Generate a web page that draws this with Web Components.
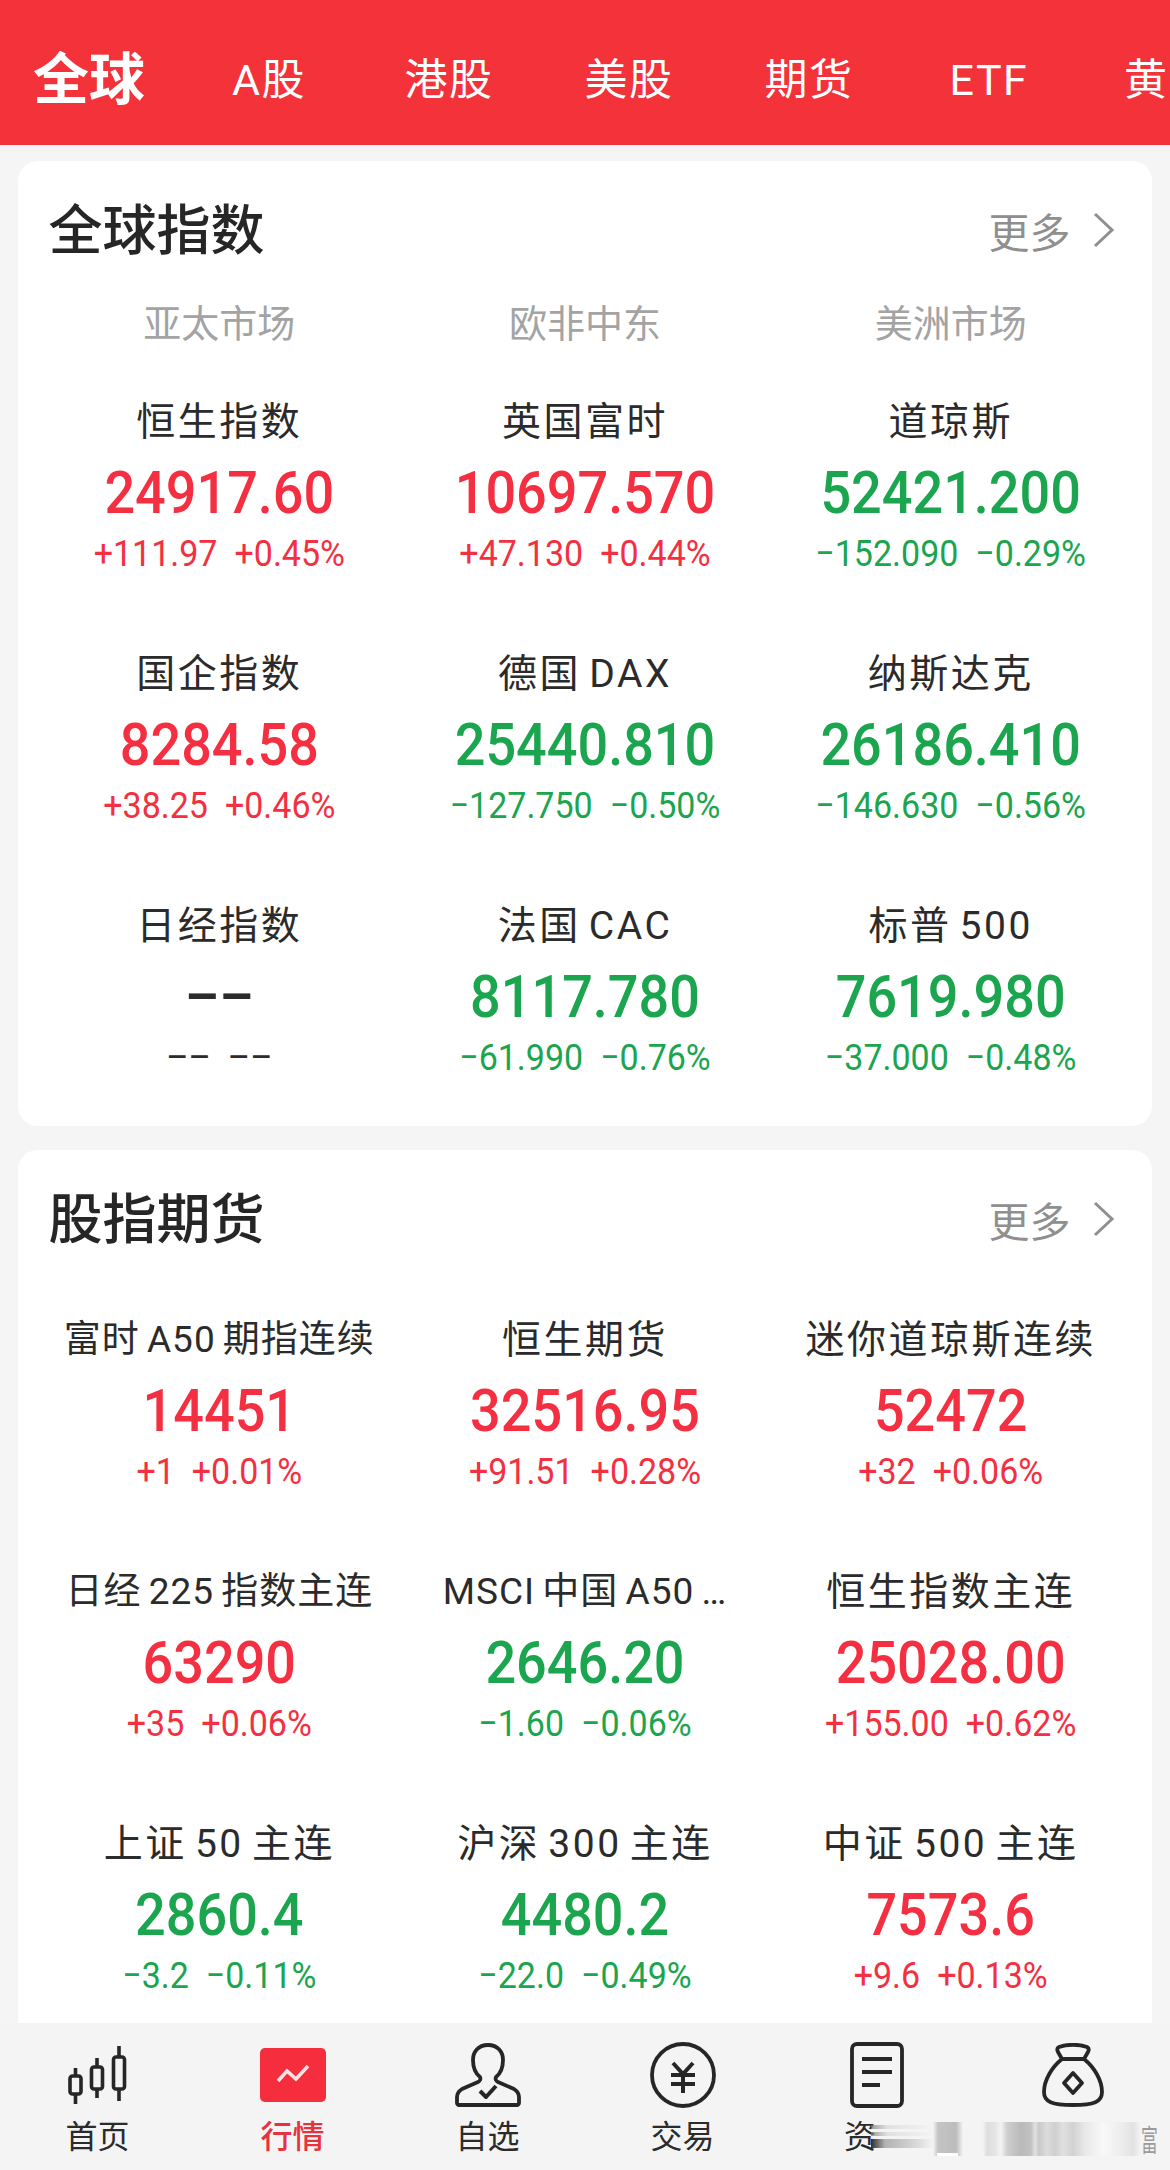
<!doctype html>
<html lang="zh">
<head>
<meta charset="utf-8">
<title>行情</title>
<style>
  html, body { margin: 0; padding: 0; background: #f5f5f5; }
  body { font-family: Roboto, "Noto Sans CJK SC", sans-serif; }
</style>
</head>
<body>
<market-page>
  <top-tabs slot="top"></top-tabs>
  <index-card heading="全球指数" markets="亚太市场,欧非中东,美洲市场">
    <quote-cell name="恒生指数" price="24917.60" chg="+111.97" pct="+0.45%"></quote-cell>
    <quote-cell name="英国富时" price="10697.570" chg="+47.130" pct="+0.44%"></quote-cell>
    <quote-cell name="道琼斯" price="52421.200" chg="−152.090" pct="−0.29%"></quote-cell>
    <quote-cell name="国企指数" price="8284.58" chg="+38.25" pct="+0.46%"></quote-cell>
    <quote-cell name="德国 DAX" price="25440.810" chg="−127.750" pct="−0.50%"></quote-cell>
    <quote-cell name="纳斯达克" price="26186.410" chg="−146.630" pct="−0.56%"></quote-cell>
    <quote-cell name="日经指数" price="––" chg="––" pct="––"></quote-cell>
    <quote-cell name="法国 CAC" price="8117.780" chg="−61.990" pct="−0.76%"></quote-cell>
    <quote-cell name="标普 500" price="7619.980" chg="−37.000" pct="−0.48%"></quote-cell>
  </index-card>
  <index-card heading="股指期货">
    <quote-cell small name="富时 A50 期指连续" price="14451" chg="+1" pct="+0.01%"></quote-cell>
    <quote-cell name="恒生期货" price="32516.95" chg="+91.51" pct="+0.28%"></quote-cell>
    <quote-cell name="迷你道琼斯连续" price="52472" chg="+32" pct="+0.06%"></quote-cell>
    <quote-cell small name="日经 225 指数主连" price="63290" chg="+35" pct="+0.06%"></quote-cell>
    <quote-cell small name="MSCI 中国 A50 …" price="2646.20" chg="−1.60" pct="−0.06%"></quote-cell>
    <quote-cell name="恒生指数主连" price="25028.00" chg="+155.00" pct="+0.62%"></quote-cell>
    <quote-cell name="上证 50 主连" price="2860.4" chg="−3.2" pct="−0.11%"></quote-cell>
    <quote-cell name="沪深 300 主连" price="4480.2" chg="−22.0" pct="−0.49%"></quote-cell>
    <quote-cell name="中证 500 主连" price="7573.6" chg="+9.6" pct="+0.13%"></quote-cell>
  </index-card>
  <bottom-nav slot="bottom"></bottom-nav>
</market-page>

<script>
const ICONS = {
  home: `<svg width="60" height="58" viewBox="0 0 60 58" fill="none" stroke="#262626" stroke-width="3.6">
    <path d="M7.500 22v8M7.500 48v10M29 12v9M29 43v9M51 0v11M51 43v12"/>
    <rect x="2" y="30" width="11" height="18" rx="2.500"/>
    <rect x="23.500" y="21" width="11" height="22" rx="2.500"/>
    <rect x="45.500" y="11" width="11" height="32" rx="2.500"/></svg>`,
  quote: `<svg width="66" height="54" viewBox="0 0 66 54">
    <rect width="66" height="54" rx="5" fill="#f62d3d"/>
    <path d="M18 33l9-10 9 8 12-13" fill="none" stroke="#fbe3e5" stroke-width="3.600"/></svg>`,
  user: `<svg width="66" height="64" viewBox="0 0 66 64" fill="none" stroke="#262626" stroke-width="3.800" stroke-linejoin="round">
    <path d="M33 2c-10 0-15 7-15 15 0 8 2 13 7 17 1 2 0 4-2 5L7 46c-3 2-5 4-5 8v6c0 1 1 2 2 2h58c1 0 2-1 2-2v-6c0-4-2-6-5-8l-16-7c-2-1-3-3-2-5 5-4 7-9 7-17 0-8-5-15-15-15z"/>
    <path d="M25 48l6 6 10-11" stroke-width="4"/></svg>`,
  trade: `<svg width="66" height="66" viewBox="0 0 66 66" fill="none" stroke="#262626" stroke-width="3.800">
    <ellipse cx="33" cy="33" rx="31" ry="31"/>
    <path d="M23 21l10 11 10-11M21 33h24M21 42h24M33 32v19" stroke-width="4"/></svg>`,
  doc: `<svg width="54" height="66" viewBox="0 0 54 66" fill="none" stroke="#262626" stroke-width="3.800">
    <rect x="2" y="2" width="50" height="62" rx="5"/>
    <path d="M12 17h30M12 30h30M12 43h18" stroke-width="4"/></svg>`,
  bag: `<svg width="62" height="64" viewBox="0 0 62 64" fill="none" stroke="#262626" stroke-width="3.800" stroke-linejoin="round">
    <path d="M17 4c8-3 20-3 28 0 2 1 2 3 1 5l-4 7H20l-4-7c-1-2-1-4 1-5z"/>
    <path d="M20 16C10 24 2 37 2 49c0 10 8 13 29 13s29-3 29-13c0-12-8-25-18-33"/>
    <path d="M31 30l9 10-9 10-9-10z"/></svg>`
};

class MarketPage extends HTMLElement {
  constructor() {
    super();
    this.attachShadow({ mode: 'open' });
    this.shadowRoot.innerHTML = `
      <style>
        :host { display: flex; flex-direction: column; width: 1170px; height: 2170px; overflow: hidden; background: #f5f5f5; }
        main { flex: 1; min-height: 0; overflow: hidden; padding: 16px 18px 0; display: flex; flex-direction: column; gap: 24px; }
      </style>
      <slot name="top"></slot>
      <main><slot></slot></main>
      <slot name="bottom"></slot>
    `;
  }
}

class TopTabs extends HTMLElement {
  constructor() {
    super();
    this.attachShadow({ mode: 'open' });
    const tabs = ['A股', '港股', '美股', '期货', 'ETF'];
    this.shadowRoot.innerHTML = `
      <style>
        :host { display: flex; align-items: center; height: 145px; padding: 14px 0 0 33px; box-sizing: border-box; background: #f3323a; color: #fff; overflow: hidden; white-space: nowrap; }
        b { font-size: 56px; font-weight: 700; line-height: 70px; width: 146px; flex: none; }
        span { font-size: 43px; line-height: 70px; width: 180px; flex: none; text-align: center; letter-spacing: 1.5px; }
        .last { width: 43px; margin-left: 45px; text-align: left; letter-spacing: 0; }
      </style>
      <b>全球</b>${tabs.map((t) => `<span>${t}</span>`).join('')}<span class="last">黄</span>
    `;
  }
}

class IndexCard extends HTMLElement {
  constructor() {
    super();
    this.attachShadow({ mode: 'open' });
  }

  connectedCallback() {
    const markets = (this.getAttribute('markets') || '').split(',').filter(Boolean);
    this.shadowRoot.innerHTML = `
      <style>
        :host { display: block; flex: none; background: #fff; border-radius: 20px; padding: 36px 18.5px 47px; }
        header { display: flex; align-items: center; justify-content: space-between; height: 70px; padding: 0 19px 0 12px; }
        h2 { margin: 0; font-size: 54px; font-weight: 500; color: #262626; line-height: 70px; }
        .more { display: flex; align-items: center; gap: 22px; margin-top: -5px; font-size: 41px; color: #8f8f8f; }
        .markets, .grid { display: grid; grid-template-columns: repeat(3, 1fr); text-align: center; }
        .markets { margin-top: 32px; font-size: 38px; line-height: 50px; color: #a3a3a3; }
        .grid { margin-top: ${markets.length ? 48 : 59}px; row-gap: 74px; }
      </style>
      <header>
        <h2>${this.getAttribute('heading')}</h2>
        <div class="more">更多<svg width="22" height="36" viewBox="0 0 22 36" fill="none" stroke="#8f8f8f" stroke-width="3"><path d="M2 2l17 16L2 34"/></svg></div>
      </header>
      ${markets.length ? `<div class="markets">${markets.map((m) => `<div>${m}</div>`).join('')}</div>` : ''}
      <div class="grid"><slot></slot></div>
    `;
  }
}

class QuoteCell extends HTMLElement {
  constructor() {
    super();
    this.attachShadow({ mode: 'open' });
  }

  connectedCallback() {
    const chg = this.getAttribute('chg');
    const dir = chg.startsWith('+') ? 'up' : chg.startsWith('−') ? 'down' : 'none';
    this.shadowRoot.innerHTML = `
      <style>
        :host { display: flex; flex-direction: column; align-items: center; height: 178px; color: #2b2b2b; --c: #2b2b2b; white-space: nowrap; }
        :host([data-dir="up"]) { --c: #f42f41; }
        :host([data-dir="down"]) { --c: #1ba54e; }
        .name { font-size: 39px; line-height: 50px; letter-spacing: 2.500px; word-spacing: -4px; }
        :host([small]) .name { font-size: 37px; letter-spacing: 1px; word-spacing: -3px; }
        .price { margin-top: 14px; font-size: 54px; font-weight: 500; line-height: 64px; color: var(--c); transform: scaleY(1.1); }
        .chg { margin-top: 6px; display: flex; gap: 17px; font-size: 34px; line-height: 44px; color: var(--c); transform: scaleY(1.1); }
      </style>
      <div class="name">${this.getAttribute('name')}</div>
      <div class="price">${this.getAttribute('price')}</div>
      <div class="chg"><span>${chg}</span><span>${this.getAttribute('pct')}</span></div>
    `;
    this.dataset.dir = dir;
  }
}

class BottomNav extends HTMLElement {
  constructor() {
    super();
    this.attachShadow({ mode: 'open' });
    const items = [['home', '首页'], ['quote', '行情'], ['user', '自选'], ['trade', '交易'], ['doc', '资'], ['bag', '']];
    this.shadowRoot.innerHTML = `
      <style>
        :host { display: grid; grid-template-columns: repeat(6, 195px); height: 147px; background: #f4f4f4; position: relative; }
        .item { display: flex; flex-direction: column; align-items: center; color: #2b2b2b; font-size: 32px; }
        .icon { height: 68px; margin-top: 18px; display: flex; align-items: center; justify-content: center; }
        .label { line-height: 40px; margin-top: 8px; height: 40px; }
        .item.on .label { color: #e8323f; font-weight: 500; }
        .doc { align-items: flex-start; padding-left: 64px; }
        .doc .icon { margin-left: 6px; }
        .smear { position: absolute; left: 871px; top: 99px; width: 270px; height: 34px;
          background:
            linear-gradient(90deg, rgba(35,35,35,.95), rgba(150,150,150,.7) 14px, rgba(190,190,190,.5) 46px, rgba(225,225,225,0) 62px) 0 17px / 100% 9px no-repeat,
            linear-gradient(90deg, rgba(120,120,120,.7), rgba(205,205,205,.5) 16px, rgba(225,225,225,0) 62px) 0 3px / 100% 4px no-repeat,
            linear-gradient(90deg, rgba(120,120,120,.7), rgba(205,205,205,.5) 16px, rgba(225,225,225,0) 62px) 0 10px / 100% 4px no-repeat,
            linear-gradient(#fff, #fff) 66px 31px / 21px 3px no-repeat,
            linear-gradient(90deg, transparent 62px, #c4c4c4 67px, #bcbcbc 85px, transparent 92px,
              transparent 112px, #dedede 116px, #e4e4e4 124px, transparent 130px,
              #cfcfcf 136px, #b9b9b9 150px, #c2c2c2 160px, #e2e2e2 164px, #c9c9c9 168px, #dcdcdc 176px, #cfcfcf 184px, #e0e0e0 192px, #d2d2d2 202px,
              #e8e8e8 214px, #f8f8f8 232px, #ececec 252px, #e2e2e2 262px, transparent 270px); }
        .tail { position: absolute; left: 1141px; top: 101px; font-size: 30px; line-height: 34px; color: #9a9a9a; transform: scaleX(.56); transform-origin: left center; }
      </style>
      ${items.map(([icon, label]) => `
        <div class="item ${icon === 'quote' ? 'on' : ''} ${icon === 'doc' ? 'doc' : ''}">
          <div class="icon">${ICONS[icon]}</div>
          <div class="label">${label}</div>
        </div>
      `).join('')}
      <div class="smear"></div>
      <div class="tail">富</div>
    `;
  }
}

customElements.define('market-page', MarketPage);
customElements.define('top-tabs', TopTabs);
customElements.define('index-card', IndexCard);
customElements.define('quote-cell', QuoteCell);
customElements.define('bottom-nav', BottomNav);
</script>
</body>
</html>
